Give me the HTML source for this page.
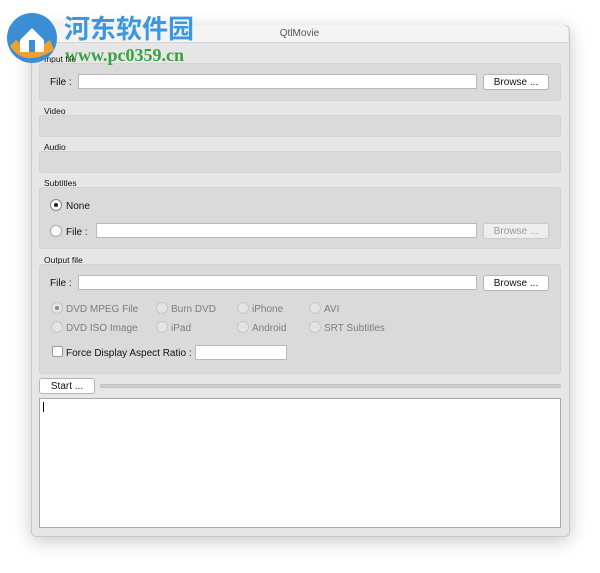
<!DOCTYPE html>
<html><head><style>
body{margin:0;width:600px;height:573px;background:#fff;position:relative;overflow:hidden;font-family:"Liberation Sans",Arial,sans-serif;font-size:11px;color:#111}
.a{position:absolute}
.win{left:31px;top:25px;width:537px;height:510px;background:#e6e6e6;border:1px solid #c8c8c8;border-radius:5px;box-shadow:0 4px 18px rgba(0,0,0,.22)}
.tb{left:31px;top:25px;width:537px;height:17px;background:#f4f4f4;border-bottom:1px solid #d6d6d6;border-radius:5px 5px 0 0;text-align:center;font-size:10px;color:#555;line-height:17px}
.g{left:39px;width:522px;background:#dadada;border-radius:3px;border:1px solid #d2d2d2;box-sizing:border-box}
.l{font-size:8.5px;left:44px}
.in{background:#fff;border:1px solid #b9b9b9;height:15px;box-sizing:border-box}
.bt{background:#fff;border:1px solid #b4b4b4;border-radius:3px;height:16px;box-sizing:border-box;text-align:center;line-height:15px;font-size:10px}
.r{width:12px;height:12px;border-radius:50%;border:1px solid #a8a8a8;background:#fff;box-sizing:border-box}
.d .r{background:#e4e4e4;border-color:#c6c6c6}
.d{color:#7c7c7c;font-size:10px}
</style></head><body>
<div class="a win"></div>
<div class="a tb">QtlMovie</div>
<div class="a l" style="top:54px">Input file</div>
<div class="a g" style="top:63px;height:38px"></div>
<div class="a" style="left:50px;top:77px;font-size:10px">File :</div>
<div class="a in" style="left:78px;top:74px;width:399px"></div>
<div class="a bt" style="left:483px;top:74px;width:66px">Browse ...</div>
<div class="a l" style="top:106px">Video</div>
<div class="a g" style="top:115px;height:22px"></div>
<div class="a l" style="top:142px">Audio</div>
<div class="a g" style="top:151px;height:22px"></div>
<div class="a l" style="top:178px">Subtitles</div>
<div class="a g" style="top:187px;height:62px"></div>
<div class="a r" style="left:50px;top:199px;border-color:#888"><div class="a" style="left:3px;top:3px;width:4px;height:4px;border-radius:50%;background:#222"></div></div>
<div class="a" style="left:66px;top:201px;font-size:10px">None</div>
<div class="a r" style="left:50px;top:225px"></div>
<div class="a" style="left:66px;top:227px;font-size:10px">File :</div>
<div class="a in" style="left:96px;top:223px;width:381px"></div>
<div class="a bt" style="left:483px;top:223px;width:66px;color:#999;border-color:#ccc;background:#eee">Browse ...</div>
<div class="a l" style="top:255px">Output file</div>
<div class="a g" style="top:264px;height:110px"></div>
<div class="a" style="left:50px;top:278px;font-size:10px">File :</div>
<div class="a in" style="left:78px;top:275px;width:399px"></div>
<div class="a bt" style="left:483px;top:275px;width:66px">Browse ...</div>
<div class="d">
<div class="a r" style="left:51px;top:302px"><div class="a" style="left:3px;top:3px;width:4px;height:4px;border-radius:50%;background:#888"></div></div>
<div class="a" style="left:66px;top:304px">DVD MPEG File</div>
<div class="a r" style="left:156px;top:302px"></div><div class="a" style="left:171px;top:304px">Burn DVD</div>
<div class="a r" style="left:237px;top:302px"></div><div class="a" style="left:252px;top:304px">iPhone</div>
<div class="a r" style="left:309px;top:302px"></div><div class="a" style="left:324px;top:304px">AVI</div>
<div class="a r" style="left:51px;top:321px"></div><div class="a" style="left:66px;top:323px">DVD ISO Image</div>
<div class="a r" style="left:156px;top:321px"></div><div class="a" style="left:171px;top:323px">iPad</div>
<div class="a r" style="left:237px;top:321px"></div><div class="a" style="left:252px;top:323px">Android</div>
<div class="a r" style="left:309px;top:321px"></div><div class="a" style="left:324px;top:323px">SRT Subtitles</div>
</div>
<div class="a" style="left:52px;top:346px;width:11px;height:11px;border:1px solid #999;border-radius:2px;background:#fff;box-sizing:border-box"></div>
<div class="a" style="left:66px;top:348px;font-size:10px">Force Display Aspect Ratio :</div>
<div class="a in" style="left:195px;top:345px;width:92px"></div>
<div class="a bt" style="left:39px;top:378px;width:56px">Start ...</div>
<div class="a" style="left:100px;top:384px;width:461px;height:4px;border-radius:2px;background:#cfcfcf;border:1px solid #c0c0c0;box-sizing:border-box"></div>
<div class="a" style="left:39px;top:398px;width:522px;height:130px;background:#fff;border:1px solid #a8a8a8;box-sizing:border-box"></div>
<div class="a" style="left:43px;top:402px;width:1px;height:10px;background:#000"></div>
<svg class="a" style="left:4px;top:10px" width="58" height="56" viewBox="0 0 58 56"><circle cx="28" cy="28" r="25" fill="#3a8fd4"/><path d="M6 36 Q20 58 50 40 L46 30 Q28 44 12 30Z" fill="#f0a030"/><path d="M16 30 L28 18 L40 30 L40 42 L16 42Z" fill="#fff"/><rect x="25" y="30" width="6" height="12" fill="#3a8fd4"/></svg>
<div class="a" style="left:64px;top:12px;font-family:'Noto Sans CJK SC',sans-serif;font-weight:bold;font-size:26px;color:#3d96e0;line-height:32px">河东软件园</div>
<div class="a" style="left:65px;top:45px;font-family:'Liberation Serif',serif;font-weight:bold;font-size:18px;color:#3aa040;line-height:20px">www.pc0359.cn</div>
</body></html>
